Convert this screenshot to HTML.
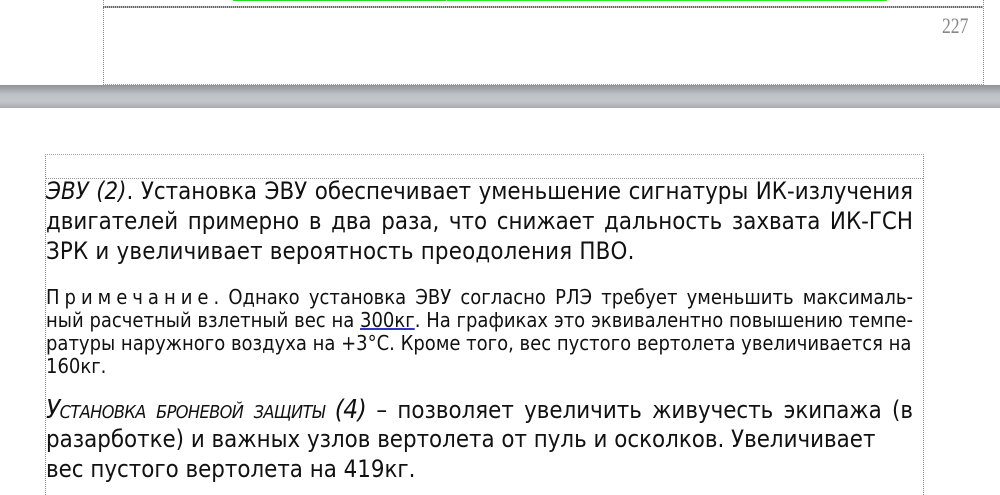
<!DOCTYPE html>
<html><head><meta charset="utf-8"><style>
body{margin:0;width:1000px;height:492px;overflow:hidden;background:#fff;position:relative;font-family:"DejaVu Sans Condensed","DejaVu Sans",sans-serif;color:#111}
.abs{position:absolute}
.l{position:absolute;left:46px;width:867px;white-space:nowrap}
.j{text-align:justify;text-align-last:justify}
.big{font-size:23.8px}
.sm{font-size:20px}
</style></head><body>
<div class="abs" style="left:103px;top:0;width:879px;height:84px;border-left:1px dotted #888;border-right:1px dotted #888;border-bottom:1px dotted #999"></div>
<div class="abs" style="left:103px;top:6px;width:880px;height:2px;background:repeating-linear-gradient(90deg,#666 0 1px,#bbb 1px 2px)"></div>
<div class="abs" style="left:233px;top:0;width:213px;height:1px;background:#22dd22"></div>
<div class="abs" style="left:447px;top:0;width:440px;height:1px;background:#22ee22"></div>
<div class="abs" style="left:942px;top:13px;font-family:'Liberation Serif',serif;font-size:22px;color:#888;transform:scaleX(.8);transform-origin:left">227</div>
<div class="abs" style="left:0;top:85px;width:1000px;height:23px;background:linear-gradient(#8e9297,#bdc1c5 40%,#c3c6ca 70%,#a8acb0)"></div>
<div class="abs" style="left:45px;top:154px;width:877px;height:340px;border-left:1px dotted #888;border-right:1px dotted #888;border-top:1px dotted #aaa"></div>
<div class="abs" style="left:45px;top:178px;width:878px;height:0;border-top:1px dotted #999"></div>

<div class="l big j" style="top:177px"><i>ЭВУ (2)</i>. Установка ЭВУ обеспечивает уменьшение сигнатуры ИК-излучения</div>
<div class="l big j" style="top:207px">двигателей примерно в два раза, что снижает дальность захвата ИК-ГСН</div>
<div class="l big" style="top:237px;letter-spacing:0.2px">ЗРК и увеличивает вероятность преодоления ПВО.</div>

<div class="l sm j" style="top:285px"><span style="letter-spacing:5px">Примечание</span>. Однако установка ЭВУ согласно РЛЭ требует уменьшить максималь-</div>
<div class="l sm j" style="top:308px">ный расчетный взлетный вес на <u style="text-decoration-color:#33c">300кг</u>. На графиках это эквивалентно повышению темпе-</div>
<div class="l sm j" style="top:331px;width:864px">ратуры наружного воздуха на +3°С. Кроме того, вес пустого вертолета увеличивается на</div>
<div class="l sm" style="top:354px">160кг.</div>

<div class="l big j" style="top:395px"><i style="font-variant:small-caps;font-size:26px;letter-spacing:-0.6px">Установка броневой защиты (4)</i> – позволяет увеличить живучесть экипажа (в</div>
<div class="l big" style="top:425px">разарботке) и важных узлов вертолета от пуль и осколков. Увеличивает</div>
<div class="l big" style="top:455px">вес пустого вертолета на 419кг.</div>
</body></html>
